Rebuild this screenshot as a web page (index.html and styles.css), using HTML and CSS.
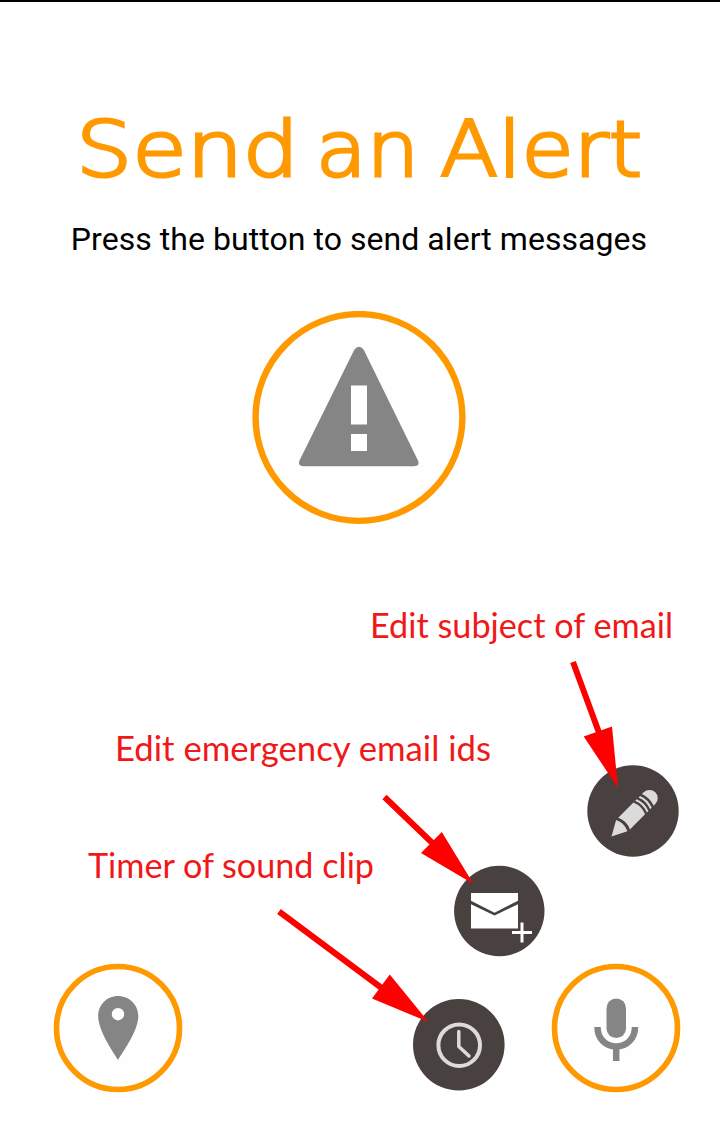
FILE: index.html
```html
<!DOCTYPE html>
<html lang="en">
<head>
<meta charset="utf-8">
<title>Send an Alert</title>
<link rel="stylesheet" href="styles.css">
</head>
<body>
<main class="screen">
  <h1 class="title"><svg class="title-art" viewBox="0 0 720 120">
    <text class="title-text" x="76" y="84.500" textLength="223" lengthAdjust="spacingAndGlyphs">Send</text>
    <text class="title-text" x="316" y="84.500" textLength="103" lengthAdjust="spacingAndGlyphs">an</text>
    <text class="title-text" x="440" y="84.500" textLength="202" lengthAdjust="spacingAndGlyphs">Alert</text>
  </svg></h1>
  <p class="subtitle">Press the button to send alert messages</p>
  <button class="alert-button" aria-label="Send alert">
    <svg viewBox="0 0 214 214">
      <circle class="ring" cx="107" cy="106.500" r="103.4" stroke-width="6.4"/>
      <path class="glyph" d="M102.3 38.700q4.7-5.8 9.4 0L166 149.500q2.2 5.5-4 5.7H51.5q-6.200-.2-4-5.700Z"/>
      <path class="cutout" d="M99 74.500h16v39H99zM99 123h16v17H99z"/>
    </svg>
  </button>
  <section class="actions">
    <svg class="canvas" viewBox="0 0 720 526">
      <g transform="translate(0 -600)">
        <circle class="ring" cx="118" cy="1028" r="61.500" stroke-width="5.600"/>
        <path class="glyph" fill-rule="evenodd" d="M118 996c-11 0-19.800 8.700-19.800 20 0 14 13 33 19.800 44 6.800-11 20.300-30 20.300-44 0-11.300-9.300-20-20.300-20Zm0 12a6.200 6.200 0 1 1 0 12.400 6.200 6.200 0 0 1 0-12.400Z"/>
        <circle class="ring" cx="616" cy="1028" r="61.500" stroke-width="5.600"/>
        <rect class="glyph" x="606.500" y="998.500" width="19.500" height="39.500" rx="9.750"/>
        <path class="mic-stand" d="M597.500 1027c0 11.500 8 19.500 18.700 19.500s18.800-8 18.800-19.500M616.200 1046v15"/>

        <circle class="bubble" cx="633" cy="811" r="45.700"/>
        <g transform="translate(611.500 836.500) rotate(-45)">
          <path class="pencil" d="M0 0 15-8.500Q19-.5 15 7.500ZM18-8.500H39.500Q43 0 39.500 8H18Q22 0 18-8.500ZM42-8.500h2.200q3.200 8 0 16.500H42q3.200-8.500 0-16.500ZM46.700-8.500h2.200q3.200 8 0 16.500h-2.200q3.200-8.500 0-16.500ZM51.500-8.500H54a8.200 8.200 0 0 1 0 16.500h-2.500q3-8 0-16.500Z"/>
        </g>
        <circle class="bubble" cx="499.300" cy="911" r="45.200"/>
        <path class="mail" d="M471 893h47v7.800l-23.500 11.900-23.500-11.900ZM471 904.200l23.500 11.300 23.500-11.300v24.200h-47Z"/>
        <path class="plus-halo" d="M512 932.500h20M522 922.500v20"/>
        <path class="plus" d="M512 932.500h20M522 922.500v20"/>
        <circle class="bubble" cx="458.800" cy="1044.800" r="45.800"/>
        <circle class="clock" cx="459.200" cy="1045.200" r="20.800" stroke-width="4"/>
        <path class="clock hands" d="M458.800 1031.500v15l10.200 9.500"/>

        <path class="arrow-line" d="m573 662 28 76M384.500 797l52 50M279 911.500l106 79"/>
        <path class="arrow-head" d="m583.700 736.500 28.300-10L618 788ZM421 853l20.800-21L473.500 884ZM372 998.500l17.800-24L428.500 1022Z"/>
      </g>
      <text class="note" x="370" y="38" textLength="303" lengthAdjust="spacingAndGlyphs">Edit subject of email</text>
      <text class="note" x="115" y="161" textLength="376" lengthAdjust="spacingAndGlyphs">Edit emergency email ids</text>
      <text class="note" x="88" y="278" textLength="286" lengthAdjust="spacingAndGlyphs">Timer of sound clip</text>
    </svg>
  </section>
</main>
</body>
</html>
```

FILE: styles.css
```css
* { box-sizing: border-box; }
body { margin: 0; background: #fff; }
.screen {
  display: flex;
  flex-direction: column;
  align-items: center;
  width: 720px;
  height: 1126px;
  padding-top: 89px;
  border-top: 2px solid #000;
  overflow: hidden;
}
.title { margin: 0; height: 120px; font-weight: 400; }
.title-art { display: block; width: 720px; height: 120px; overflow: visible; }
.title-text {
  font: 200 76px "DejaVu Sans Light", "DejaVu Sans", sans-serif;
  fill: #ff9900;
  stroke: #ff9900;
  stroke-width: 3;
}
.subtitle {
  margin: 7px 2px 0 0;
  font: 400 32px/42px Roboto, sans-serif;
  letter-spacing: .05px;
  color: #000;
  white-space: nowrap;
}
.alert-button {
  width: 214px;
  height: 214px;
  margin: 51px 2px 0 0;
  padding: 0;
  border: 0;
  border-radius: 50%;
  background: none;
}
.alert-button svg { display: block; }
.actions { margin-top: 75px; }
.canvas { display: block; width: 720px; height: 526px; }
.ring { fill: #fefefe; stroke: #ff9900; }
.glyph { fill: #858585; }
.cutout { fill: #fff; }
.mic-stand { fill: none; stroke: #858585; stroke-width: 6.500; }
.bubble { fill: #494040; }
.pencil { fill: #dcdada; }
.mail { fill: #fff; }
.plus { stroke: #fff; stroke-width: 3; }
.plus-halo { stroke: #494040; stroke-width: 5; }
.clock { fill: none; stroke: #dcdada; }
.hands { stroke-width: 3.500; stroke-linecap: round; stroke-linejoin: round; }
.arrow-line { stroke: #f00; stroke-width: 6; }
.arrow-head { fill: #f00; }
.note { font: 400 34.500px Lato, sans-serif; fill: #f01818; }
```
